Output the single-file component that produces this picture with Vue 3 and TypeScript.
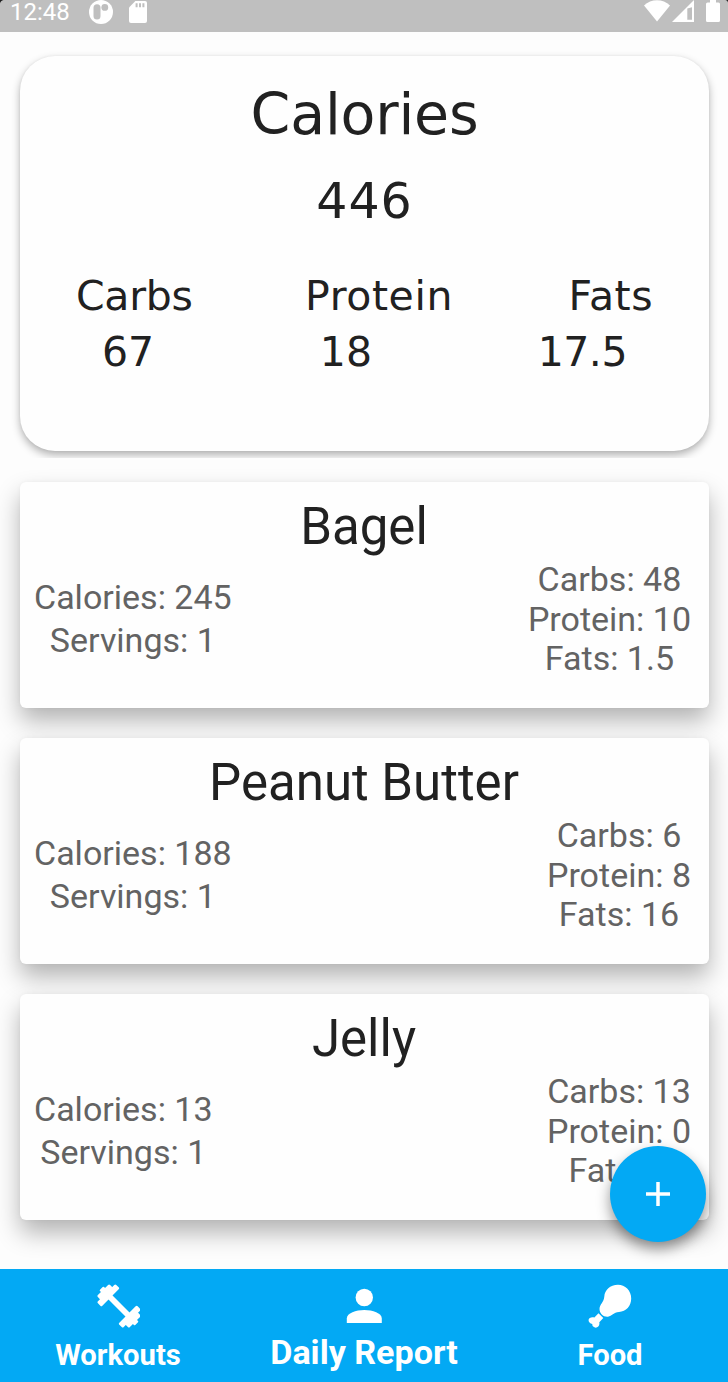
<script setup lang="ts">
interface Macro { label: string; value: string; labelClass: string; valueClass: string }
interface Food { name: string; calories: number; servings: number; carbs: number; protein: number; fats: string }

const macros: Macro[] = [
  { label: 'Carbs', value: '67', labelClass: 'l-carbs', valueClass: 'v-carbs' },
  { label: 'Protein', value: '18', labelClass: 'l-protein', valueClass: 'v-protein' },
  { label: 'Fats', value: '17.5', labelClass: 'l-fats', valueClass: 'v-fats' },
]

const foods: Food[] = [
  { name: 'Bagel', calories: 245, servings: 1, carbs: 48, protein: 10, fats: '1.5' },
  { name: 'Peanut Butter', calories: 188, servings: 1, carbs: 6, protein: 8, fats: '16' },
  { name: 'Jelly', calories: 13, servings: 1, carbs: 13, protein: 0, fats: '0' },
]
</script>

<template>
  <div class="screen">
    <header class="status">
      <svg class="corner corner-left" width="4" height="4" viewBox="0 0 4 4"><path d="M0 0h3.500Q.500.500 0 3.500z" fill="#1c1c1c" /></svg>
      <svg class="corner corner-right" width="3" height="3" viewBox="0 0 3 3"><path d="M3 0H.500Q2.700.300 3 2.500z" fill="#1c1c1c" /></svg>
      <span class="clock">12:48</span>
      <svg class="app-icon" width="24" height="24" viewBox="0 0 24 24">
        <circle cx="12" cy="12" r="12" fill="#fff" />
        <rect x="4.500" y="4.200" width="7" height="15.400" rx="3.500" fill="#bfbfbf" />
        <circle cx="15.800" cy="7.400" r="3.400" fill="#bfbfbf" />
      </svg>
      <svg class="sd" width="18" height="22" viewBox="0 0 18 22">
        <path d="M6.400 0H16a2 2 0 0 1 2 2v18a2 2 0 0 1-2 2H2a2 2 0 0 1-2-2V6.400z" fill="#fff" />
        <path d="M7.600 2.300v4M11 2.300v4M14.400 2.300v4" stroke="#bfbfbf" stroke-width="2" />
      </svg>
      <span class="grow"></span>
      <svg width="26" height="22" viewBox="0 0 26 22">
        <path d="M0 5.500C7-1.600 19-1.600 26 5.500L13 21.500z" fill="#fff" />
      </svg>
      <svg class="signal" width="22" height="22" viewBox="0 0 22 22">
        <path d="M22 0v22H0z" fill="#fff" />
        <path d="M15.300 8.600L20 7.300V19.800H15.300z" fill="#bfbfbf" />
      </svg>
      <svg class="battery" width="14" height="22" viewBox="0 0 14 22">
        <path d="M4 0h6v2.500h2.500A1.500 1.500 0 0 1 14 4v16.500a1.500 1.500 0 0 1-1.500 1.500h-11A1.500 1.500 0 0 1 0 20.500V4a1.500 1.500 0 0 1 1.500-1.500H4z" fill="#fff" />
      </svg>
    </header>

    <div class="summary-wrap">
      <section class="summary">
        <h1>Calories</h1>
        <p class="total">446</p>
        <div class="macro-labels">
          <span v-for="m in macros" :key="m.label" :class="m.labelClass">{{ m.label }}</span>
        </div>
        <div class="macro-values">
          <span v-for="m in macros" :key="m.label" :class="m.valueClass">{{ m.value }}</span>
        </div>
      </section>
    </div>

    <main class="foods">
      <article v-for="f in foods" :key="f.name" class="food">
        <h2>{{ f.name }}</h2>
        <div class="details">
          <div class="left">
            <div>Calories: {{ f.calories }}</div>
            <div>Servings: {{ f.servings }}</div>
          </div>
          <div class="right">
            <div>Carbs: {{ f.carbs }}</div>
            <div>Protein: {{ f.protein }}</div>
            <div>Fats: {{ f.fats }}</div>
          </div>
        </div>
      </article>
    </main>

    <button class="fab" aria-label="Add food">
      <svg width="24" height="24" viewBox="0 0 24 24"><path d="M12 0v24M0 12h24" stroke="#fff" stroke-width="3.500" /></svg>
    </button>

    <nav class="tabs">
      <div class="tab workouts">
        <svg width="44" height="44" viewBox="0 0 44 44">
          <g transform="translate(23 22) rotate(45) scale(.96)" fill="#fff">
            <rect x="-26" y="-3" width="52" height="6" rx="1" />
            <rect x="-19" y="-13.500" width="6.500" height="27" rx="1.500" />
            <rect x="-23.600" y="-9" width="6" height="18" rx="1.500" />
            <rect x="12.500" y="-13.500" width="6.500" height="27" rx="1.500" />
            <rect x="17.600" y="-9" width="6" height="18" rx="1.500" />
          </g>
        </svg>
        <span>Workouts</span>
      </div>
      <div class="tab report">
        <svg width="36" height="36" viewBox="0 0 36 36">
          <circle cx="18.300" cy="9.500" r="8.700" fill="#fff" />
          <path d="M.800 35v-4.500C.800 25 10 22 18.300 22s17.500 3 17.500 8.500V35z" fill="#fff" />
        </svg>
        <span>Daily Report</span>
      </div>
      <div class="tab meal">
        <svg width="44" height="44" viewBox="0 0 44 44">
          <path d="M30 .800C22 .800 16.800 6 16.300 12.500C16 18 11.500 20.500 11.500 25C11.500 29.500 15.500 33.200 20 32.700C24 32 25.500 28.500 31 28C38 27.500 43.200 22 43.200 14.500C43.200 6.500 37 .800 30 .800z" fill="#fff" />
          <path d="M10.500 29.300L15.300 34L11.300 38.300C12.300 42.500 8 45.300 5.200 42.600C4.300 41.500 4.300 40.500 4.300 39.900C.500 39.500-.500 35.500 1.800 34C3.300 33 5 33.200 6.400 33.500z" fill="#fff" />
        </svg>
        <span>Food</span>
      </div>
    </nav>
  </div>
</template>

<style>
body { margin: 0; background: #fdfdfd; }
</style>

<style scoped>
.screen { position: relative; width: 728px; height: 1382px; overflow: hidden; background: #fdfdfd; font-family: Roboto, sans-serif; display: flex; flex-direction: column; }
h1, h2, p { margin: 0; font-weight: 400; }
svg { display: block; flex: none; }
.status { box-sizing: border-box; height: 32px; flex: none; background: #bfbfbf; display: flex; align-items: flex-start; padding: 0 8px 0 10px; color: #fff; }
.corner { position: absolute; top: 0; }
.corner-left { left: 0; }
.corner-right { right: 0; }
.clock { font-size: 24px; line-height: 24px; width: 79px; white-space: nowrap; }
.sd { margin: 1px 0 0 16px; }
.grow { flex: 1; }
.signal { margin-left: 2px; }
.battery { margin-left: 12px; }
.summary-wrap { height: 426px; flex: none; padding: 24px 19px 0 20px; overflow: hidden; box-sizing: border-box; }
.summary { box-sizing: border-box; height: 395px; border-radius: 35px; background: #fefefe; box-shadow: 0 4px 9px rgba(0,0,0,.3), 0 0 3px rgba(0,0,0,.05); padding-top: 23px; font-family: "DejaVu Sans", sans-serif; color: #212121; text-align: center; }
h1 { font-size: 57px; line-height: 70px; letter-spacing: -.2px; }
.total { font-size: 49px; line-height: 60px; margin-top: 23px; letter-spacing: 1px; }
.macro-labels, .macro-values { display: flex; justify-content: space-between; font-size: 41px; line-height: 56px; }
.macro-labels { margin-top: 36px; padding: 0 56px 0 56px; }
.l-carbs { letter-spacing: -.300px; }
.l-protein { letter-spacing: .600px; margin-left: -3px; }
.l-fats { letter-spacing: .500px; }
.macro-values { padding: 0 82px 0 82px; }
.v-fats { letter-spacing: -.500px; }
.foods { display: flex; flex-direction: column; gap: 30.500px; padding: 24px 19px 0 20px; height: 811px; box-sizing: border-box; flex: none; overflow: hidden; }
.food { box-sizing: border-box; height: 225.500px; flex: none; padding: 14.500px 18px 0 14px; border-radius: 6px; background: #fefefe; box-shadow: 0 13px 24px rgba(0,0,0,.29), 0 0 4px rgba(0,0,0,.04); }
h2 { font-size: 51px; line-height: 60px; text-align: center; color: #212121; margin-right: -3px; }
.details { display: flex; justify-content: space-between; text-align: center; color: #636363; font-size: 34px; }
.left { line-height: 43px; padding-top: 19.500px; }
.right { line-height: 39.300px; padding-top: 3.900px; }
.fab { position: absolute; left: 610px; top: 1146px; width: 96px; height: 96px; border: 0; border-radius: 50%; background: #03a9f4; display: flex; align-items: center; justify-content: center; padding: 0; box-shadow: 0 7px 14px rgba(0,0,0,.42); }
.tabs { flex: none; height: 113px; background: #03a9f4; display: grid; grid-template-columns: 236px 256px 236px; color: #fff; font-weight: 700; }
.tab { display: flex; flex-direction: column; align-items: center; white-space: nowrap; font-size: 29.200px; line-height: 36px; padding-top: 15px; }
.tab span { margin-top: 9px; }
.report { font-size: 34.100px; padding-top: 19px; }
.report span { margin-top: 10.400px; }
</style>
